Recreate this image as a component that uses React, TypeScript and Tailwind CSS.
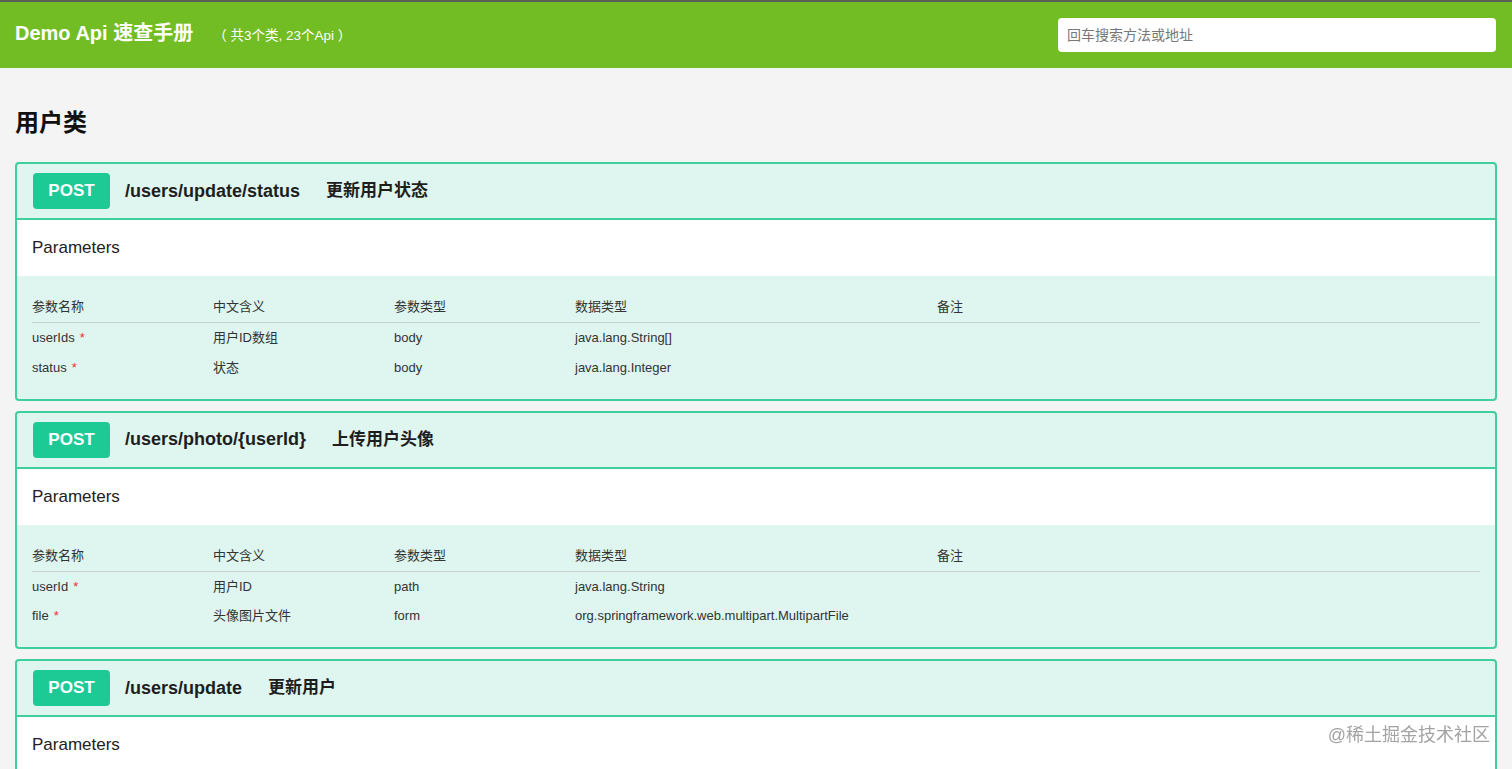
import React from "react";

type Param = { name: string; required?: boolean; cn: string; ptype: string; dtype: string; note?: string };
type Api = { method: string; path: string; desc: string; params: Param[] };

const apis: Api[] = [
  {
    method: "POST",
    path: "/users/update/status",
    desc: "更新用户状态",
    params: [
      { name: "userIds", required: true, cn: "用户ID数组", ptype: "body", dtype: "java.lang.String[]" },
      { name: "status", required: true, cn: "状态", ptype: "body", dtype: "java.lang.Integer" },
    ],
  },
  {
    method: "POST",
    path: "/users/photo/{userId}",
    desc: "上传用户头像",
    params: [
      { name: "userId", required: true, cn: "用户ID", ptype: "path", dtype: "java.lang.String" },
      { name: "file", required: true, cn: "头像图片文件", ptype: "form", dtype: "org.springframework.web.multipart.MultipartFile" },
    ],
  },
  {
    method: "POST",
    path: "/users/update",
    desc: "更新用户",
    params: [
      { name: "user", required: true, cn: "用户信息", ptype: "body", dtype: "com.example.demo.User" },
    ],
  },
];

function ApiCard({ api }: { api: Api }) {
  return (
    <div className="mb-[10px] overflow-hidden rounded-[4px] border-2 border-[#3fcf9c] bg-[#dff5ef]">
      <div className="flex h-[56px] items-center border-b-2 border-[#3fcf9c] px-[16px]">
        <div className="flex h-[36px] w-[77px] items-center justify-center rounded-[4px] bg-[#1dc995] text-[17px] font-bold text-white">
          {api.method}
        </div>
        <div className="ml-[15px] text-[18px] font-semibold text-[#1e1e1e]">{api.path}</div>
        <div className="ml-[26px] text-[17px] font-bold text-[#1e1e1e]">{api.desc}</div>
      </div>
      <div className="flex h-[56px] items-center bg-white px-[15px] text-[17px] text-[#222]">Parameters</div>
      <div className="px-[15px] pb-[16px] pt-[22px]">
        <table className="w-full table-fixed border-collapse text-left text-[13px] text-[#333]">
          <colgroup>
            <col className="w-[12.5%]" />
            <col className="w-[12.5%]" />
            <col className="w-[12.5%]" />
            <col className="w-[25%]" />
            <col className="w-[37.5%]" />
          </colgroup>
          <thead>
            <tr className="border-b border-[#c6d3cf]">
              <th className="pb-[6px] font-normal leading-[18px]">参数名称</th>
              <th className="pb-[6px] font-normal leading-[18px]">中文含义</th>
              <th className="pb-[6px] font-normal leading-[18px]">参数类型</th>
              <th className="pb-[6px] font-normal leading-[18px]">数据类型</th>
              <th className="pb-[6px] font-normal leading-[18px]">备注</th>
            </tr>
          </thead>
          <tbody>
            {api.params.map((p) => (
              <tr key={p.name} className="h-[30px]">
                <td>
                  {p.name}
                  {p.required && <span className="ml-[5px] text-[#f0302f]">*</span>}
                </td>
                <td>{p.cn}</td>
                <td>{p.ptype}</td>
                <td>{p.dtype}</td>
                <td>{p.note ?? ""}</td>
              </tr>
            ))}
          </tbody>
        </table>
      </div>
    </div>
  );
}

export default function App() {
  return (
    <div
      className="min-h-screen bg-[#f4f4f4]"
      style={{ fontFamily: '"Liberation Sans", "Noto Sans CJK SC", sans-serif' }}
    >
      <header className="flex h-[68px] items-center justify-between border-t-2 border-[#5b6156] bg-[#72bd23] px-[15px]">
        <div className="flex items-baseline pb-[4px]">
          <span className="text-[20px] font-bold text-white">Demo Api 速查手册</span>
          <span className="ml-[20px] text-[13.5px] text-white">（ 共3个类, 23个Api ）</span>
        </div>
        <div className="mr-[1px] flex h-[34px] w-[438px] items-center rounded-[4px] bg-white px-[9px]">
          <input
            className="w-full bg-transparent text-[14px] text-[#333] outline-none placeholder:text-[#777]"
            placeholder="回车搜索方法或地址"
          />
        </div>
      </header>
      <main className="px-[15px] pt-[39px]">
        <h2 className="mb-[23px] text-[24px] font-bold leading-[32px] text-[#111]">用户类</h2>
        {apis.map((a) => (
          <ApiCard key={a.path} api={a} />
        ))}
      </main>
      <div className="fixed bottom-[20px] right-[22px] text-[18px] text-[#a3a3a3]">@稀土掘金技术社区</div>
    </div>
  );
}
